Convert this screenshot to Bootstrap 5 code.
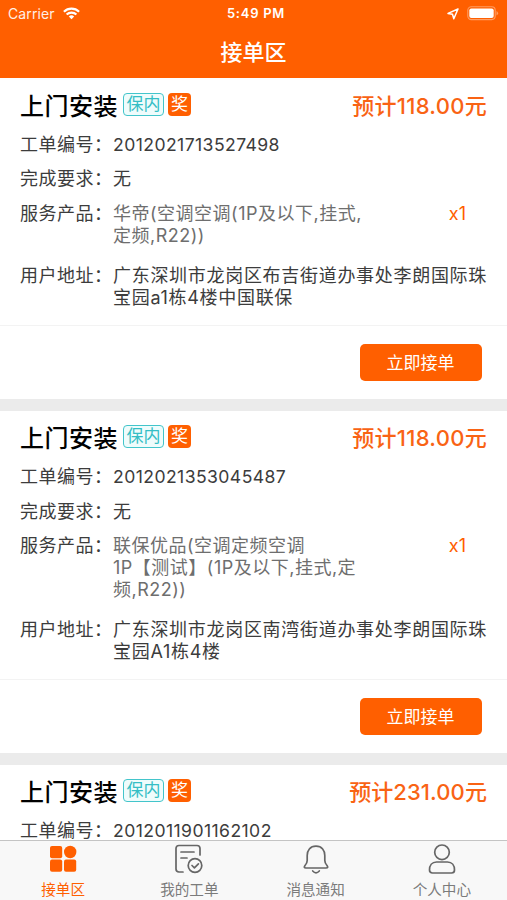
<!DOCTYPE html>
<html lang="zh-CN">
<head>
<meta charset="utf-8">
<meta name="viewport" content="width=device-width, initial-scale=1">
<title>接单区</title>
<link href="https://cdn.jsdelivr.net/npm/bootstrap@5.3.0/dist/css/bootstrap.min.css" rel="stylesheet">
<style>
:root{--brand:#ff5f00}
body{font-family:Inter,"Noto Sans CJK SC",sans-serif;font-size:18px;line-height:22px;color:#3c3c3c;height:900px;overflow:hidden;background:#fff}
.app-head{background:var(--brand);height:78px;color:#fff}
.status{height:27px;font-size:13px;line-height:27px;padding:0 8px 0 8px}
.carrier{font-size:14px;letter-spacing:.1px;opacity:.9}
.clock{font-weight:600;letter-spacing:.75px;font-size:13px;padding-left:5px}
.page-title{font-size:22px;font-weight:500;line-height:51px}
.feed{min-height:0;padding-top:1px}
.order{border-bottom:12.4px solid #ebebeb;flex:none}
.order-body{padding:10px 20px 16px}
.title-row{height:34px;margin-bottom:11px}
.job{font-size:24px;letter-spacing:.5px;font-weight:500;color:#000;line-height:34px;padding-top:1px}
.tag-in,.tag-prize{height:23px;font-size:17px;line-height:20px;border-radius:4px;margin-bottom:3px}
.tag-in{width:41px;border:1.5px solid #43c5cb;color:#35bec5;background:#effcfc;margin-left:5px}
.tag-prize{width:23px;background:var(--brand);color:#fff;line-height:22px;margin-left:4px}
.price{font-size:22px;font-weight:500;color:#f96314;white-space:nowrap;letter-spacing:.1px}
.price-narrow{letter-spacing:.3px}
.fields{gap:12.4px}
.key{width:93px;flex:none;letter-spacing:.5px;white-space:nowrap}
.val{letter-spacing:.7px;white-space:nowrap}
.num{font-size:17.6px;letter-spacing:.42px}
.product{color:#6e6e6e;margin-bottom:6px;letter-spacing:.5px}
.qty{color:var(--brand);padding-right:21px}
.order-foot{border-top:1.5px solid #f3f3f3;padding:18px 25px 18px 0}
.take{background:var(--brand);color:#fff;width:122px;height:37px;border-radius:5px;font-size:17px;line-height:38px;padding:0 1px 0 0;border:0}
.tabs{height:60px;background:#f8f8f8;border-top:1.5px solid #c4c4c4;color:#7b7b7b;font-size:14.6px;line-height:20px;padding-right:2px}
.tabs svg{display:block;width:32px;height:32px;margin-top:2px}
.tabs span{margin-top:5px}
.tab-on{color:var(--brand)}
</style>
<script src="https://cdn.jsdelivr.net/npm/bootstrap@5.3.0/dist/js/bootstrap.bundle.min.js"></script>
</head>
<body class="d-flex flex-column">
<header class="app-head flex-shrink-0">
  <div class="status d-flex align-items-center">
    <div class="col d-flex align-items-center gap-2"><span class="carrier">Carrier</span>
      <svg width="17" height="13" viewBox="0 0 17 13" fill="none" stroke="#fff" stroke-width="2.1"><path d="M.9 4.8a10.8 10.8 0 0 1 15.2 0M3.6 7.6a7 7 0 0 1 9.8 0"/><path d="M8.5 12.2 5.8 9.5a3.9 3.9 0 0 1 5.4 0z" fill="#fff" stroke="none"/></svg>
    </div>
    <div class="clock">5:49 PM</div>
    <div class="col d-flex align-items-center justify-content-end">
      <svg width="12" height="12" viewBox="0 0 12 12" fill="none" stroke="#fff" stroke-width="1.5" stroke-linejoin="round"><path d="M11 1 1 5.400l4.500.900L6.800 10.800z"/></svg>
      <svg class="ms-2" width="32" height="15" viewBox="0 0 32 15"><rect x=".8" y=".8" width="27.400" height="12.800" rx="3.500" fill="none" stroke="#ff9d62" stroke-width="1.100"/><rect x="2.300" y="2.600" width="24.400" height="9.300" rx="2" fill="#fff"/><path d="M29.500 5v4.500q1.600-.6 1.600-2.200T29.500 5z" fill="#ff9d62"/></svg>
    </div>
  </div>
  <div class="page-title text-center">接单区</div>
</header>

<main class="feed flex-fill overflow-hidden d-flex flex-column">
  <article class="order">
    <div class="order-body">
      <div class="title-row d-flex align-items-center">
        <span class="job">上门安装</span><span class="tag-in text-center">保内</span><span class="tag-prize text-center">奖</span>
        <span class="price price-narrow ms-auto">预计118.00元</span>
      </div>
      <div class="fields d-flex flex-column">
        <div class="d-flex"><span class="key">工单编号：</span><span class="val num">2012021713527498</span></div>
        <div class="d-flex"><span class="key">完成要求：</span><span class="val">无</span></div>
        <div class="d-flex"><span class="key">服务产品：</span><span class="val product">华帝(空调空调(1P及以下,挂式,<br>定频,R22))</span><span class="qty ms-auto">x1</span></div>
        <div class="d-flex"><span class="key">用户地址：</span><span class="val">广东深圳市龙岗区布吉街道办事处李朗国际珠<br>宝园a1栋4楼中国联保</span></div>
      </div>
    </div>
    <div class="order-foot d-flex justify-content-end"><button class="btn take">立即接单</button></div>
  </article>

  <article class="order">
    <div class="order-body">
      <div class="title-row d-flex align-items-center">
        <span class="job">上门安装</span><span class="tag-in text-center">保内</span><span class="tag-prize text-center">奖</span>
        <span class="price price-narrow ms-auto">预计118.00元</span>
      </div>
      <div class="fields d-flex flex-column">
        <div class="d-flex"><span class="key">工单编号：</span><span class="val num">2012021353045487</span></div>
        <div class="d-flex"><span class="key">完成要求：</span><span class="val">无</span></div>
        <div class="d-flex"><span class="key">服务产品：</span><span class="val product">联保优品(空调定频空调<br>1P【测试】(1P及以下,挂式,定<br>频,R22))</span><span class="qty ms-auto">x1</span></div>
        <div class="d-flex"><span class="key">用户地址：</span><span class="val">广东深圳市龙岗区南湾街道办事处李朗国际珠<br>宝园A1栋4楼</span></div>
      </div>
    </div>
    <div class="order-foot d-flex justify-content-end"><button class="btn take">立即接单</button></div>
  </article>

  <article class="order">
    <div class="order-body">
      <div class="title-row d-flex align-items-center">
        <span class="job">上门安装</span><span class="tag-in text-center">保内</span><span class="tag-prize text-center">奖</span>
        <span class="price ms-auto">预计231.00元</span>
      </div>
      <div class="fields d-flex flex-column">
        <div class="d-flex"><span class="key">工单编号：</span><span class="val num">2012011901162102</span></div>
      </div>
    </div>
  </article>
</main>

<nav class="tabs d-flex flex-shrink-0 text-center">
  <div class="col d-flex flex-column align-items-center tab-on">
    <svg viewBox="0 0 32 32" fill="currentColor"><rect x="3" y="3" width="12.2" height="12.2" rx="2"/><circle cx="23.200" cy="9" r="6.200"/><rect x="3" y="16.600" width="12.2" height="12.2" rx="2"/><rect x="17" y="16.600" width="12.2" height="12.2" rx="2"/></svg>
    <span>接单区</span>
  </div>
  <div class="col d-flex flex-column align-items-center">
    <svg viewBox="0 0 32 32" fill="none" stroke="#666" stroke-width="1.7" stroke-linecap="round" stroke-linejoin="round"><path d="M10 29H6Q3 29 3 26V5.500Q3 2.500 6 2.500H24Q27 2.500 27 5.500V12M8 9h13M8 15h6"/><circle cx="22" cy="22.500" r="6.800"/><path d="m19 22.500 2.400 2.300 4-4"/></svg>
    <span>我的工单</span>
  </div>
  <div class="col d-flex flex-column align-items-center">
    <svg viewBox="0 0 32 32" fill="none" stroke="#666" stroke-width="1.7" stroke-linecap="round" stroke-linejoin="round"><path d="M16 3.200C10 3.200 7.200 7.500 7.200 12.500V17.500Q7.200 20 5 22.500Q3.200 25 6 25H26Q28.800 25 27 22.500Q24.800 20 24.800 17.500V12.500C24.800 7.500 22 3.200 16 3.200zM12.700 28Q16 31.600 19.300 28"/></svg>
    <span>消息通知</span>
  </div>
  <div class="col d-flex flex-column align-items-center">
    <svg viewBox="0 0 32 32" fill="none" stroke="#666" stroke-width="1.7" stroke-linejoin="round"><circle cx="16" cy="9.300" r="7.300"/><path d="M10.500 19H21.500C26 19 28.500 22.500 28.500 27Q28.500 30 25.500 30H6.500Q3.500 30 3.500 27C3.500 22.500 6 19 10.500 19z"/></svg>
    <span>个人中心</span>
  </div>
</nav>
</body>
</html>
